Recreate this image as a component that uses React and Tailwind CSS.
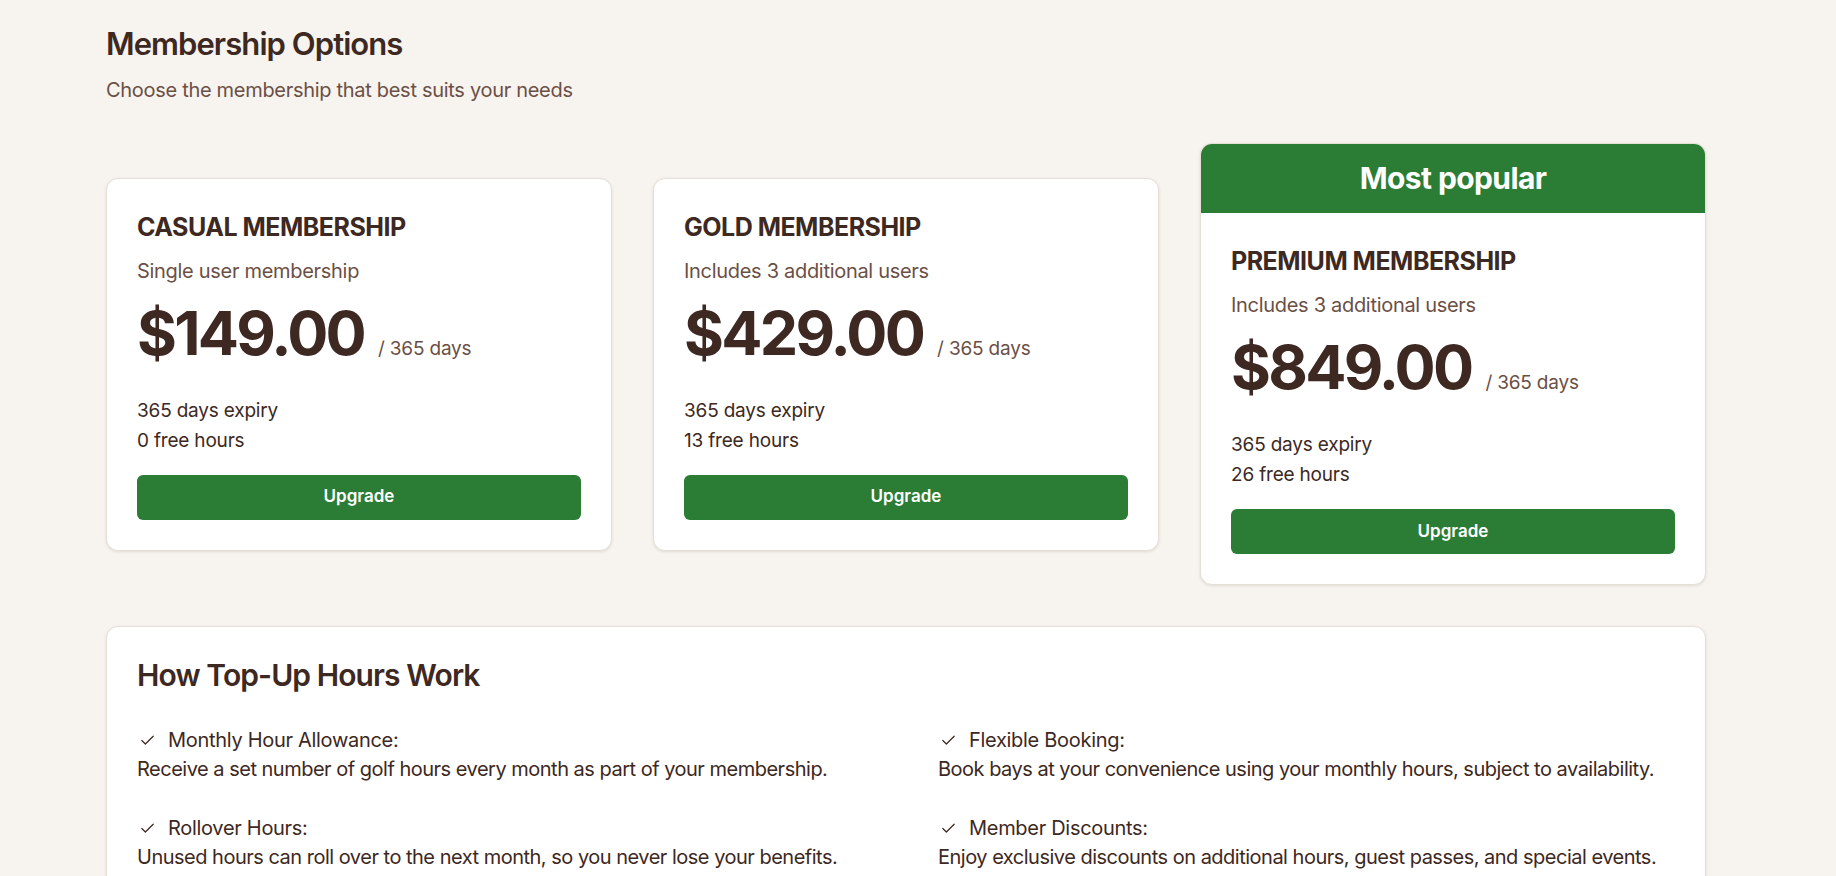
import React from "react";
import { Check } from "lucide-react";

const plans = [
  {
    name: "CASUAL MEMBERSHIP",
    note: "Single user membership",
    price: "$149.00",
    expiry: "365 days expiry",
    hours: "0 free hours",
  },
  {
    name: "GOLD MEMBERSHIP",
    note: "Includes 3 additional users",
    price: "$429.00",
    expiry: "365 days expiry",
    hours: "13 free hours",
  },
  {
    name: "PREMIUM MEMBERSHIP",
    note: "Includes 3 additional users",
    price: "$849.00",
    expiry: "365 days expiry",
    hours: "26 free hours",
    popular: true,
  },
];

const perks = [
  {
    title: "Monthly Hour Allowance:",
    text: "Receive a set number of golf hours every month as part of your membership.",
  },
  {
    title: "Flexible Booking:",
    text: "Book bays at your convenience using your monthly hours, subject to availability.",
  },
  {
    title: "Rollover Hours:",
    text: "Unused hours can roll over to the next month, so you never lose your benefits.",
  },
  {
    title: "Member Discounts:",
    text: "Enjoy exclusive discounts on additional hours, guest passes, and special events.",
  },
];

const PlanCard = ({ plan }) => {
  return (
    <div className="flex flex-col overflow-hidden rounded-xl border border-[#e6dfd5] bg-white shadow-[0_1px_3px_rgba(60,40,30,0.12)]">
      {plan.popular && (
        <div className="flex h-[69px] items-center justify-center bg-[#2b7d35] text-[30px] font-bold tracking-[-0.02em] text-white">
          Most popular
        </div>
      )}
      <div className="px-[30px] pt-[32px] pb-[30px]">
        <h2 className="text-[25px] font-bold leading-8 tracking-[-0.02em] text-[#3d2822]">
          {plan.name}
        </h2>
        <p className="mt-[14px] text-[20px] leading-7 tracking-[-0.015em] text-[#6b4f45]">
          {plan.note}
        </p>
        <div className="mt-[10px] flex items-baseline gap-[14px]">
          <span className="text-[61px] font-bold leading-[76px] tracking-[-0.045em] text-[#3d2822]">
            {plan.price}
          </span>
          <span className="text-[19px] tracking-[-0.01em] text-[#6b4f45]">
            / 365 days
          </span>
        </div>
        <div className="mt-[25px] text-[19px] leading-[30px] tracking-[-0.01em] text-[#3d2822]">
          <p>{plan.expiry}</p>
          <p>{plan.hours}</p>
        </div>
        <button className="mt-[19px] h-[45px] w-full rounded-md bg-[#2b7d35] text-[17px] font-semibold text-white">
          Upgrade
        </button>
      </div>
    </div>
  );
};

export default function App() {
  return (
    <div
      className="min-h-screen bg-[#f7f4ef] pl-[106px] pt-[24px] pb-10"
      style={{ fontFamily: "Inter, 'Noto Sans', sans-serif" }}
    >
      <div className="w-[1600px]">
        <h1 className="text-[31px] font-semibold leading-10 tracking-[-0.03em] text-[#3d2822]">
          Membership Options
        </h1>
        <p className="mt-[14px] text-[20px] leading-6 tracking-[-0.015em] text-[#6b4f45]">
          Choose the membership that best suits your needs
        </p>

        <div className="mt-[41px] grid grid-cols-3 items-center gap-[41px]">
          {plans.map((plan) => (
            <PlanCard key={plan.name} plan={plan} />
          ))}
        </div>

        <div className="mt-[41px] rounded-xl border border-[#e6dfd5] bg-white px-[30px] pt-[28px] pb-10 shadow-[0_1px_3px_rgba(60,40,30,0.12)]">
          <h2 className="text-[30px] font-semibold leading-10 tracking-[-0.03em] text-[#3d2822]">
            How Top-Up Hours Work
          </h2>
          <div className="mt-[31px] grid grid-cols-2 gap-x-16 gap-y-[31px]">
            {perks.map((perk) => (
              <div key={perk.title}>
                <div className="flex items-center gap-[12px] text-[20px] leading-7 tracking-[-0.015em] text-[#3d2822]">
                  <Check size={17} strokeWidth={1.75} className="ml-[2px]" />
                  <span>{perk.title}</span>
                </div>
                <p className="mt-[1px] text-[20px] leading-7 tracking-[-0.025em] text-[#3d2822]">
                  {perk.text}
                </p>
              </div>
            ))}
          </div>
        </div>
      </div>
    </div>
  );
}
